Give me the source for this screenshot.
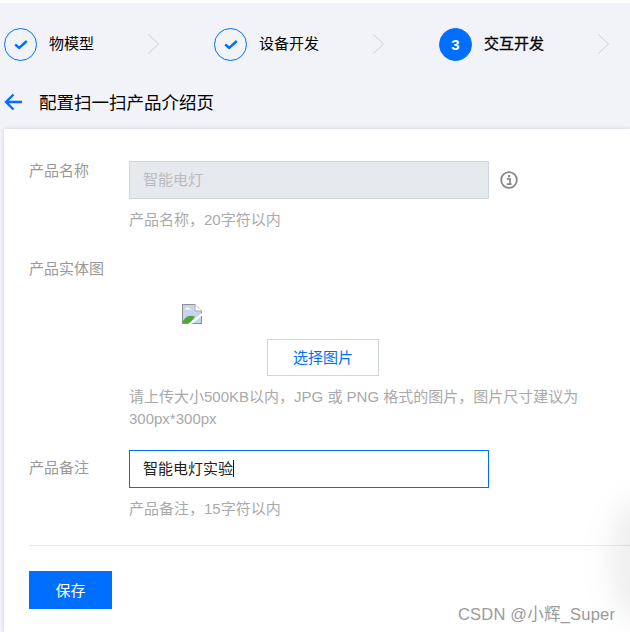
<div class="page">
  <nav class="steps">
    <div class="step">
      <span class="circle"><svg width="14" height="11" viewBox="0 0 14 11"><path d="M1.2 5.5 L5.2 9 L12.8 2" fill="none" stroke="#006eff" stroke-width="2.4"/></svg></span>
      <span class="step-name">物模型</span>
      <svg class="chev" width="11" height="20" viewBox="0 0 11 20"><path d="M0.5 0.5 L10.5 10 L0.5 19.5" fill="none" stroke="#cdcfd3" stroke-width="1"/></svg>
    </div>
    <div class="step">
      <span class="circle"><svg width="14" height="11" viewBox="0 0 14 11"><path d="M1.2 5.5 L5.2 9 L12.8 2" fill="none" stroke="#006eff" stroke-width="2.4"/></svg></span>
      <span class="step-name">设备开发</span>
      <svg class="chev" width="11" height="20" viewBox="0 0 11 20"><path d="M0.5 0.5 L10.5 10 L0.5 19.5" fill="none" stroke="#cdcfd3" stroke-width="1"/></svg>
    </div>
    <div class="step">
      <span class="circle current">3</span>
      <span class="step-name strong">交互开发</span>
      <svg class="chev" width="11" height="20" viewBox="0 0 11 20"><path d="M0.5 0.5 L10.5 10 L0.5 19.5" fill="none" stroke="#cdcfd3" stroke-width="1"/></svg>
    </div>
  </nav>

  <header class="title">
    <svg width="18" height="18" viewBox="0 0 18 18"><path d="M9.5 1.5 L2 9 L9.5 16.5 M2 9 H18" fill="none" stroke="#006eff" stroke-width="2.4"/></svg>
    <h1>配置扫一扫产品介绍页</h1>
  </header>

  <main class="card">
    <section class="row first">
      <div class="label">产品名称</div>
      <div class="field">
        <div class="input-line">
          <div class="input disabled">智能电灯</div>
          <svg class="info" width="18" height="18" viewBox="0 0 18 18">
            <circle cx="9" cy="9" r="7.8" fill="none" stroke="#888" stroke-width="1.8"/>
            <rect x="8" y="4" width="2.2" height="2.2" fill="#888"/>
            <path d="M6.8 7.8 H10 V12.8 M6.8 13.2 H11.6" fill="none" stroke="#888" stroke-width="1.7"/>
          </svg>
        </div>
        <p class="hint one">产品名称，20字符以内</p>
      </div>
    </section>

    <section class="row second">
      <div class="label">产品实体图</div>
      <div class="field upload">
        <svg class="broken" width="20" height="20" viewBox="0 0 20 20">
          <path d="M0 0 H13 L20 7 V20 H0 Z" fill="#c4d5f2"/>
          <path d="M0.5 0.5 H12.8 L19.5 7.2 V19.5 H0.5 Z" fill="none" stroke="#8f8f8f"/>
          <path d="M13 0.5 V7 H19.5" fill="#fff" stroke="#a8a8a8"/>
          <path d="M3 5 Q5 2.5 8 4.5 L10 5.5 H3 Z" fill="#fff"/>
          <path d="M1 19 V17 Q6 9 13 13 L8 19 Z" fill="#4ea632"/>
          <path d="M6 20 L20 9 V11.5 L10 20 Z" fill="#fff"/>
        </svg>
        <button class="pick">选择图片</button>
        <p class="hint two">请上传大小500KB以内，JPG 或 PNG 格式的图片，图片尺寸建议为300px*300px</p>
      </div>
    </section>

    <section class="row third">
      <div class="label">产品备注</div>
      <div class="field">
        <div class="input focused">智能电灯实验<i class="caret"></i></div>
        <p class="hint one">产品备注，15字符以内</p>
      </div>
    </section>

    <div class="actions">
      <button class="save">保存</button>
    </div>
  </main>

  <div class="glow"></div>
  <div class="mark">CSDN @小辉_Super</div>
</div>

<style>
  :global(body) {
    margin: 0;
    background: #fff;
  }
  .page {
    position: relative;
    width: 630px;
    height: 632px;
    overflow: hidden;
    box-sizing: border-box;
    padding-top: 3px;
    background: linear-gradient(#fff 0 3px, #f2f3f8 3px);
    font-family: "Liberation Sans", "Noto Sans CJK SC", sans-serif;
    font-size: 15px;
  }
  .steps {
    display: flex;
    align-items: center;
    height: 82px;
    padding-left: 4px;
    box-sizing: border-box;
  }
  .step {
    display: flex;
    flex: none;
    align-items: center;
  }
  .circle {
    display: flex;
    flex: none;
    align-items: center;
    justify-content: center;
    width: 33px;
    height: 33px;
    box-sizing: border-box;
    border: 1px solid #006eff;
    border-radius: 50%;
    color: #fff;
    font-weight: 700;
    font-size: 15px;
  }
  .circle.current {
    background: #006eff;
  }
  .step-name {
    flex: none;
    margin-left: 12px;
    color: #000;
    line-height: 20px;
    white-space: nowrap;
  }
  .step-name.strong {
    -webkit-text-stroke: 0.3px #000;
  }
  .chev {
    flex: none;
    margin-left: 54px;
    margin-right: 55px;
  }
  .title {
    display: flex;
    align-items: center;
    height: 34px;
    padding-left: 4px;
  }
  h1 {
    margin: 0 0 2px 17px;
    font-size: 17.5px;
    font-weight: 400;
    color: #000;
  }
  .card {
    position: relative;
    margin: 10px 0 0 4px;
    height: 503px;
    background: #fff;
    box-shadow: 0 0 4px rgba(54, 58, 80, 0.18);
    padding: 32px 0 0 25px;
    box-sizing: border-box;
  }
  .row {
    display: flex;
  }
  .label {
    width: 100px;
    flex: none;
    color: #999;
    line-height: 20px;
  }
  .input-line {
    display: flex;
    align-items: center;
  }
  .input {
    width: 360px;
    height: 38px;
    box-sizing: border-box;
    padding-left: 13px;
    line-height: 36px;
    border: 1px solid #cfd5de;
    color: #222;
  }
  .input.disabled {
    background: #e6e9ee;
    color: #bbb;
  }
  .input.focused {
    border-color: #006eff;
  }
  .caret {
    display: inline-block;
    width: 1px;
    height: 17px;
    background: #111;
    vertical-align: -3px;
  }
  .info {
    margin-left: 11px;
  }
  .hint {
    margin: 0;
    color: #a9a9a9;
    line-height: 22px;
  }
  .hint.one {
    margin-top: 10px;
  }
  .second {
    margin-top: 28px;
  }
  .upload {
    width: 452px;
    flex: none;
    padding-top: 45px;
  }
  .broken {
    display: block;
    margin-left: 53px;
  }
  .pick {
    display: block;
    width: 112px;
    height: 37px;
    margin: 15px 0 0 138px;
    border: 1px solid #cfd5de;
    background: #fff;
    color: #006eff;
    font: inherit;
    padding: 0 0 2px;
  }
  .hint.two {
    margin-top: 10px;
  }
  .third {
    margin-top: 20px;
  }
  .third .label {
    margin-top: 8px;
  }
  .actions {
    margin-top: 25px;
    border-top: 1px solid #e7e9ec;
    padding-top: 25px;
  }
  .save {
    display: block;
    width: 83px;
    height: 38px;
    border: 0;
    padding: 0 0 2px;
    background: #006eff;
    color: #fff;
    font: inherit;
  }
  .glow {
    position: absolute;
    right: -40px;
    top: 500px;
    width: 60px;
    height: 120px;
    border-radius: 50%;
    background: rgba(90, 90, 100, 0.1);
    filter: blur(14px);
  }
  .mark {
    position: absolute;
    left: 458px;
    top: 604px;
    color: #9a9a9a;
    font-size: 16.5px;
    letter-spacing: 0.2px;
    line-height: 20px;
    white-space: nowrap;
  }
</style>
